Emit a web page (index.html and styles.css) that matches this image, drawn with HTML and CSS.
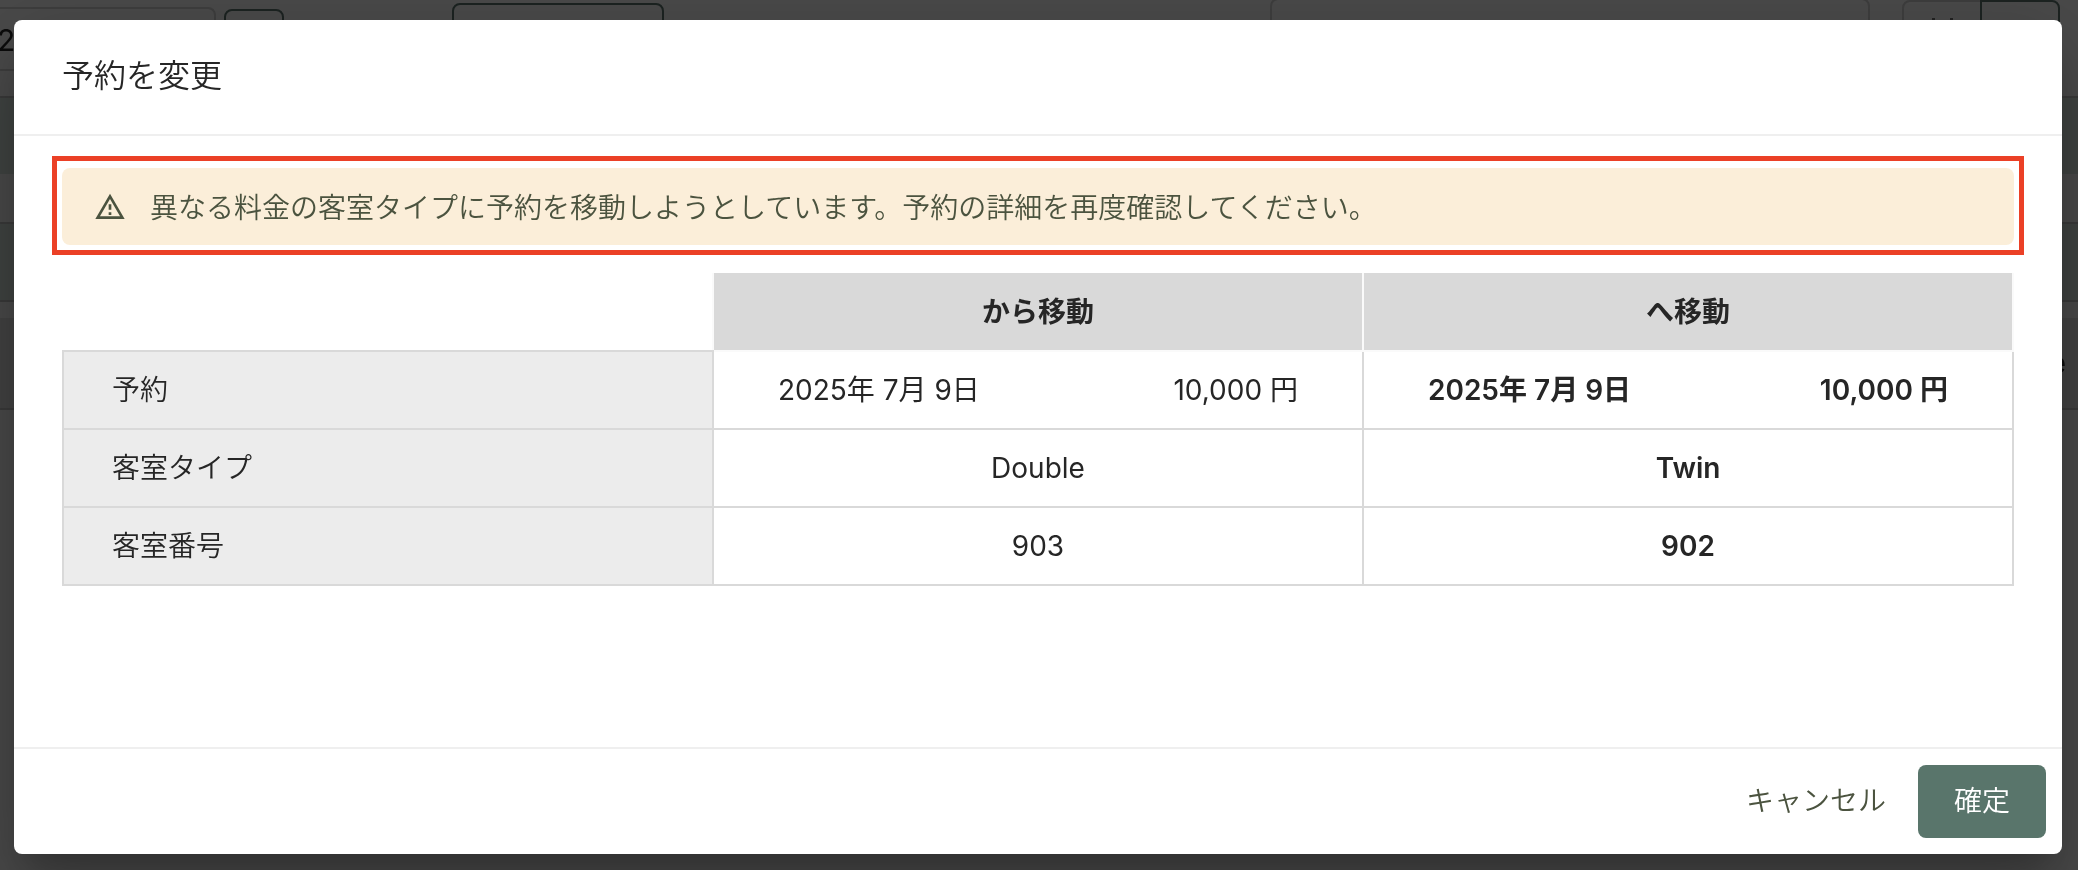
FILE: index.html
```html
<!DOCTYPE html>
<html lang="ja">
<head>
<meta charset="utf-8">
<title>予約を変更</title>
<link rel="stylesheet" href="styles.css">
</head>
<body>
<div class="backdrop" aria-hidden="true">
  <div class="toolbar">
    <span class="box box-date"></span>
    <span class="date-text">2</span>
    <span class="box box-dark box-step"></span>
    <span class="box box-dark box-today"></span>
    <span class="box box-search"></span>
    <span class="box box-toggle"></span>
    <span class="box box-dark box-toggle-active"></span>
    <span class="toggle-mark"></span>
  </div>
  <div class="strip strip-tint strip-head"></div>
  <div class="strip strip-plain strip-sub"></div>
  <div class="strip strip-tint strip-days"></div>
  <div class="strip strip-plain strip-gap"></div>
  <div class="strip strip-group"><span class="group-text">e</span></div>
  <div class="strip strip-plain strip-rest"></div>
</div>
<div class="overlay">
  <section class="modal" role="dialog" aria-labelledby="dialog-title">
    <header class="modal-header"><h1 class="modal-title" id="dialog-title">予約を変更</h1></header>
    <div class="modal-body">
      <div class="highlight">
        <div class="alert" role="alert">
          <svg class="alert-icon" viewBox="0 0 24 24" aria-hidden="true"><path d="M12 5.99 19.53 19H4.47L12 5.99M12 2 1 21h22L12 2zm1 14h-2v2h2v-2zm0-6h-2v4h2v-4z"/></svg>
          <p class="alert-text">異なる料金の客室タイプに予約を移動しようとしています。予約の詳細を再度確認してください。</p>
        </div>
      </div>
      <table class="compare">
        <thead>
          <tr><td class="corner"></td><th scope="col">から移動</th><th scope="col">へ移動</th></tr>
        </thead>
        <tbody>
          <tr>
            <th scope="row">予約</th>
            <td><div class="pair"><span>2025年 7月 9日</span><span>10,000 円</span></div></td>
            <td class="to"><div class="pair"><span>2025年 7月 9日</span><span>10,000 円</span></div></td>
          </tr>
          <tr><th scope="row">客室タイプ</th><td>Double</td><td class="to">Twin</td></tr>
          <tr><th scope="row">客室番号</th><td>903</td><td class="to">902</td></tr>
        </tbody>
      </table>
    </div>
    <footer class="modal-footer">
      <button class="btn btn-text" type="button">キャンセル</button>
      <button class="btn btn-primary" type="button">確定</button>
    </footer>
  </section>
</div>
</body>
</html>
```
FILE: styles.css
```css
* { box-sizing: border-box; }

body {
  margin: 0;
  min-height: 100vh;
  background: #4a4a4a;
  color: #262626;
  font-family: Inter, "Noto Sans CJK JP", sans-serif;
  font-size: 28px;
  line-height: 40px;
}

/* Dimmed page behind the dialog */
.backdrop {
  position: fixed;
  inset: 0;
  display: flex;
  flex-direction: column;
  overflow: hidden;
}
.toolbar { position: relative; height: 96px; }
.box {
  position: absolute;
  height: 64px;
  border: 2px solid #3e3e3e;
  border-radius: 8px;
}
.box-dark { border-color: #1c2321; }
.box-date { left: -20px; top: 7px; width: 236px; }
.date-text { position: absolute; left: -3px; top: 20px; color: #0b0b0b; font-size: 30px; }
.box-step { left: 224px; top: 9px; width: 60px; }
.box-today { left: 452px; top: 3px; width: 212px; }
.box-search { left: 1270px; top: -2px; width: 600px; }
.box-toggle { left: 1902px; top: 0; width: 80px; border-radius: 8px 0 0 8px; }
.box-toggle-active { left: 1980px; top: 0; width: 80px; border-radius: 0 8px 8px 0; }
.toggle-mark {
  position: absolute;
  left: 1932px;
  top: 18px;
  width: 21px;
  height: 3px;
  border: solid #222;
  border-width: 0 3px;
}
.strip { border-top: 2px solid #3a3a3a; }
.strip-plain { background: #4a4a4a; }
.strip-tint { background: #404442; }
.strip-head { height: 78px; }
.strip-sub { height: 48px; border-top: 0; }
.strip-days { height: 78px; }
.strip-gap { height: 18px; }
.strip-group { position: relative; height: 90px; border-top: 0; background: #434343; }
.group-text { position: absolute; right: 12px; top: 25px; color: #0b0b0b; }
.strip-rest { flex: 1; }

.overlay {
  position: relative;
  display: flex;
  min-height: 100vh;
  padding: 20px 16px 16px 14px;
}
.modal {
  display: flex;
  flex: 1;
  flex-direction: column;
  border-radius: 8px;
  background: #fff;
  box-shadow: 0 22px 30px -14px rgba(0, 0, 0, .2), 0 48px 76px 6px rgba(0, 0, 0, .14), 0 18px 92px 16px rgba(0, 0, 0, .12);
}
.modal-header { padding: 32px 48px 34px; border-bottom: 2px solid #efefef; }
.modal-title { margin: 0; font-size: 32px; line-height: 48px; font-weight: 350; }
.modal-body { flex: 1; padding: 20px 38px; }
.highlight { padding: 7px 5px 5px; border: 5px solid #eb4026; }
.alert {
  display: flex;
  align-items: center;
  gap: 24px;
  padding: 17px 32px;
  border-radius: 8px;
  background: #fbeed9;
  color: #4b533f;
}
.alert-icon { flex: none; width: 32px; height: 32px; fill: currentColor; }
.alert-text { margin: 0; padding-top: 3px; font-weight: 350; }

.compare {
  width: calc(100% - 20px);
  margin: 18px 10px 0;
  border-collapse: collapse;
  table-layout: fixed;
}
.compare th, .compare td {
  height: 78px;
  padding: 0 48px;
  border: 2px solid #d9d9d9;
  text-align: center;
  font-weight: 400;
}
.compare thead th {
  border-color: #fafafa;
  border-top: 0;
  background: #d9d9d9;
  font-weight: 700;
}
.compare .corner { border-top: 0; border-left: 0; border-right: 0; }
.compare tbody th { background: #ececec; text-align: left; font-weight: 350; }
.compare tbody .to { font-weight: 600; }
.pair { display: flex; justify-content: space-between; padding: 0 16px; }

.modal-footer {
  display: flex;
  justify-content: flex-end;
  padding: 16px;
  border-top: 2px solid #efefef;
}
.btn {
  padding: 16px 32px 17px;
  border: 0;
  border-radius: 8px;
  background: none;
  color: #4b533f;
  font: inherit;
  font-weight: 350;
}
.btn-primary { padding-inline: 36px; background: #59756b; color: #fff; }
```
